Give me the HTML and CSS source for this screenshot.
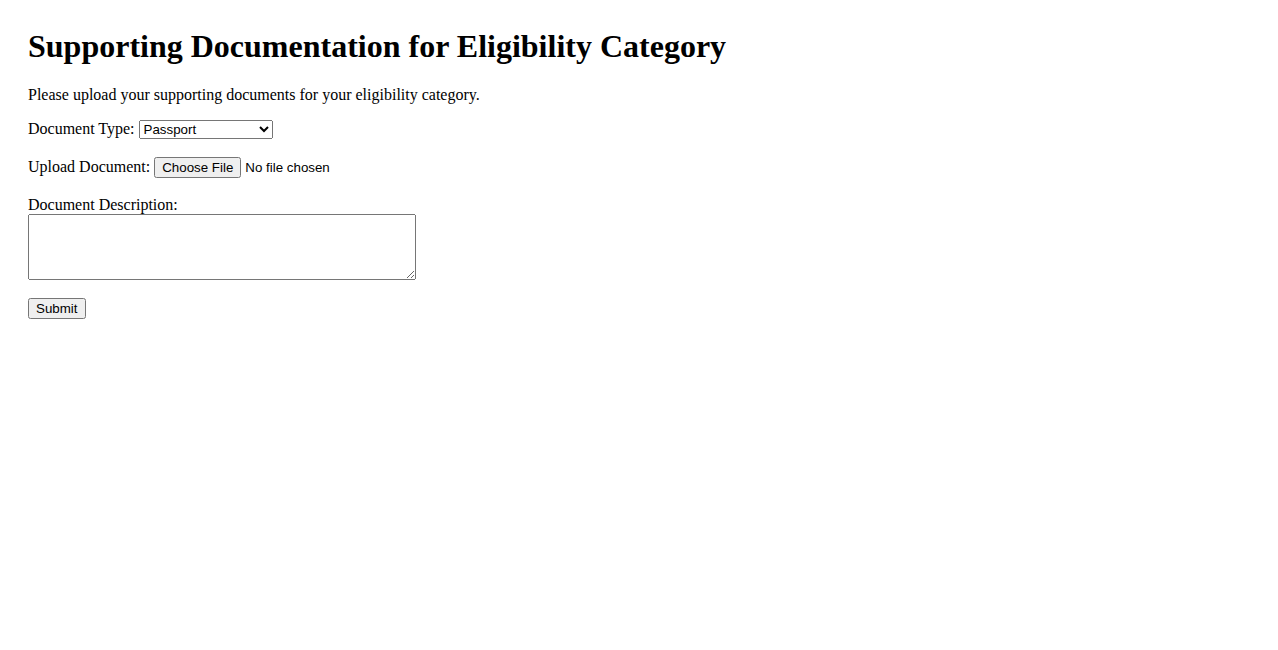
FILE: index.html
```html
<!DOCTYPE html>
<html lang="en">

<head>
    <meta charset="UTF-8">
    <meta name="viewport" content="width=device-width, initial-scale=1.0">
    <title>Supporting Documentation for Eligibility Category</title>
    <link rel="stylesheet" href="styles.css">
</head>

<body>
    <h1>Supporting Documentation for Eligibility Category</h1>
    <p>Please upload your supporting documents for your eligibility category.</p>
    <form>
        <div class="row">
            <label for="docType">Document Type:</label>
            <select id="docType" name="docType">
                <option>Passport</option>
                <option>Birth Certificate</option>
                <option>Driver's License</option>
            </select>
        </div>
        <div class="row">
            <label for="docFile">Upload Document:</label>
            <input type="file" id="docFile" name="docFile">
        </div>
        <div class="row">
            <label for="docDesc">Document Description:</label>
            <textarea id="docDesc" name="docDesc" rows="4" cols="50"></textarea>
        </div>
        <button type="submit">Submit</button>
    </form>
</body>

</html>
```

FILE: styles.css
```css
body {
    margin: 28px;
    font-family: "Liberation Serif", "Times New Roman", serif;
    font-size: 16px;
    color: #000;
}

h1 {
    font-size: 32px;
    margin: 0 0 21px;
}

.row {
    margin-bottom: 18px;
}

select,
input,
button,
textarea {
    font-family: "Liberation Sans", Arial, sans-serif;
    font-size: 13.33px;
}

select {
    width: 134px;
    height: 19px;
}

input[type="file"]::file-selector-button {
    height: 21px;
}

button {
    height: 21px;
    padding: 1px 7px 1px 6px;
}

textarea {
    display: block;
    width: 382px;
    height: 60px;
    margin: 0;
}
```
